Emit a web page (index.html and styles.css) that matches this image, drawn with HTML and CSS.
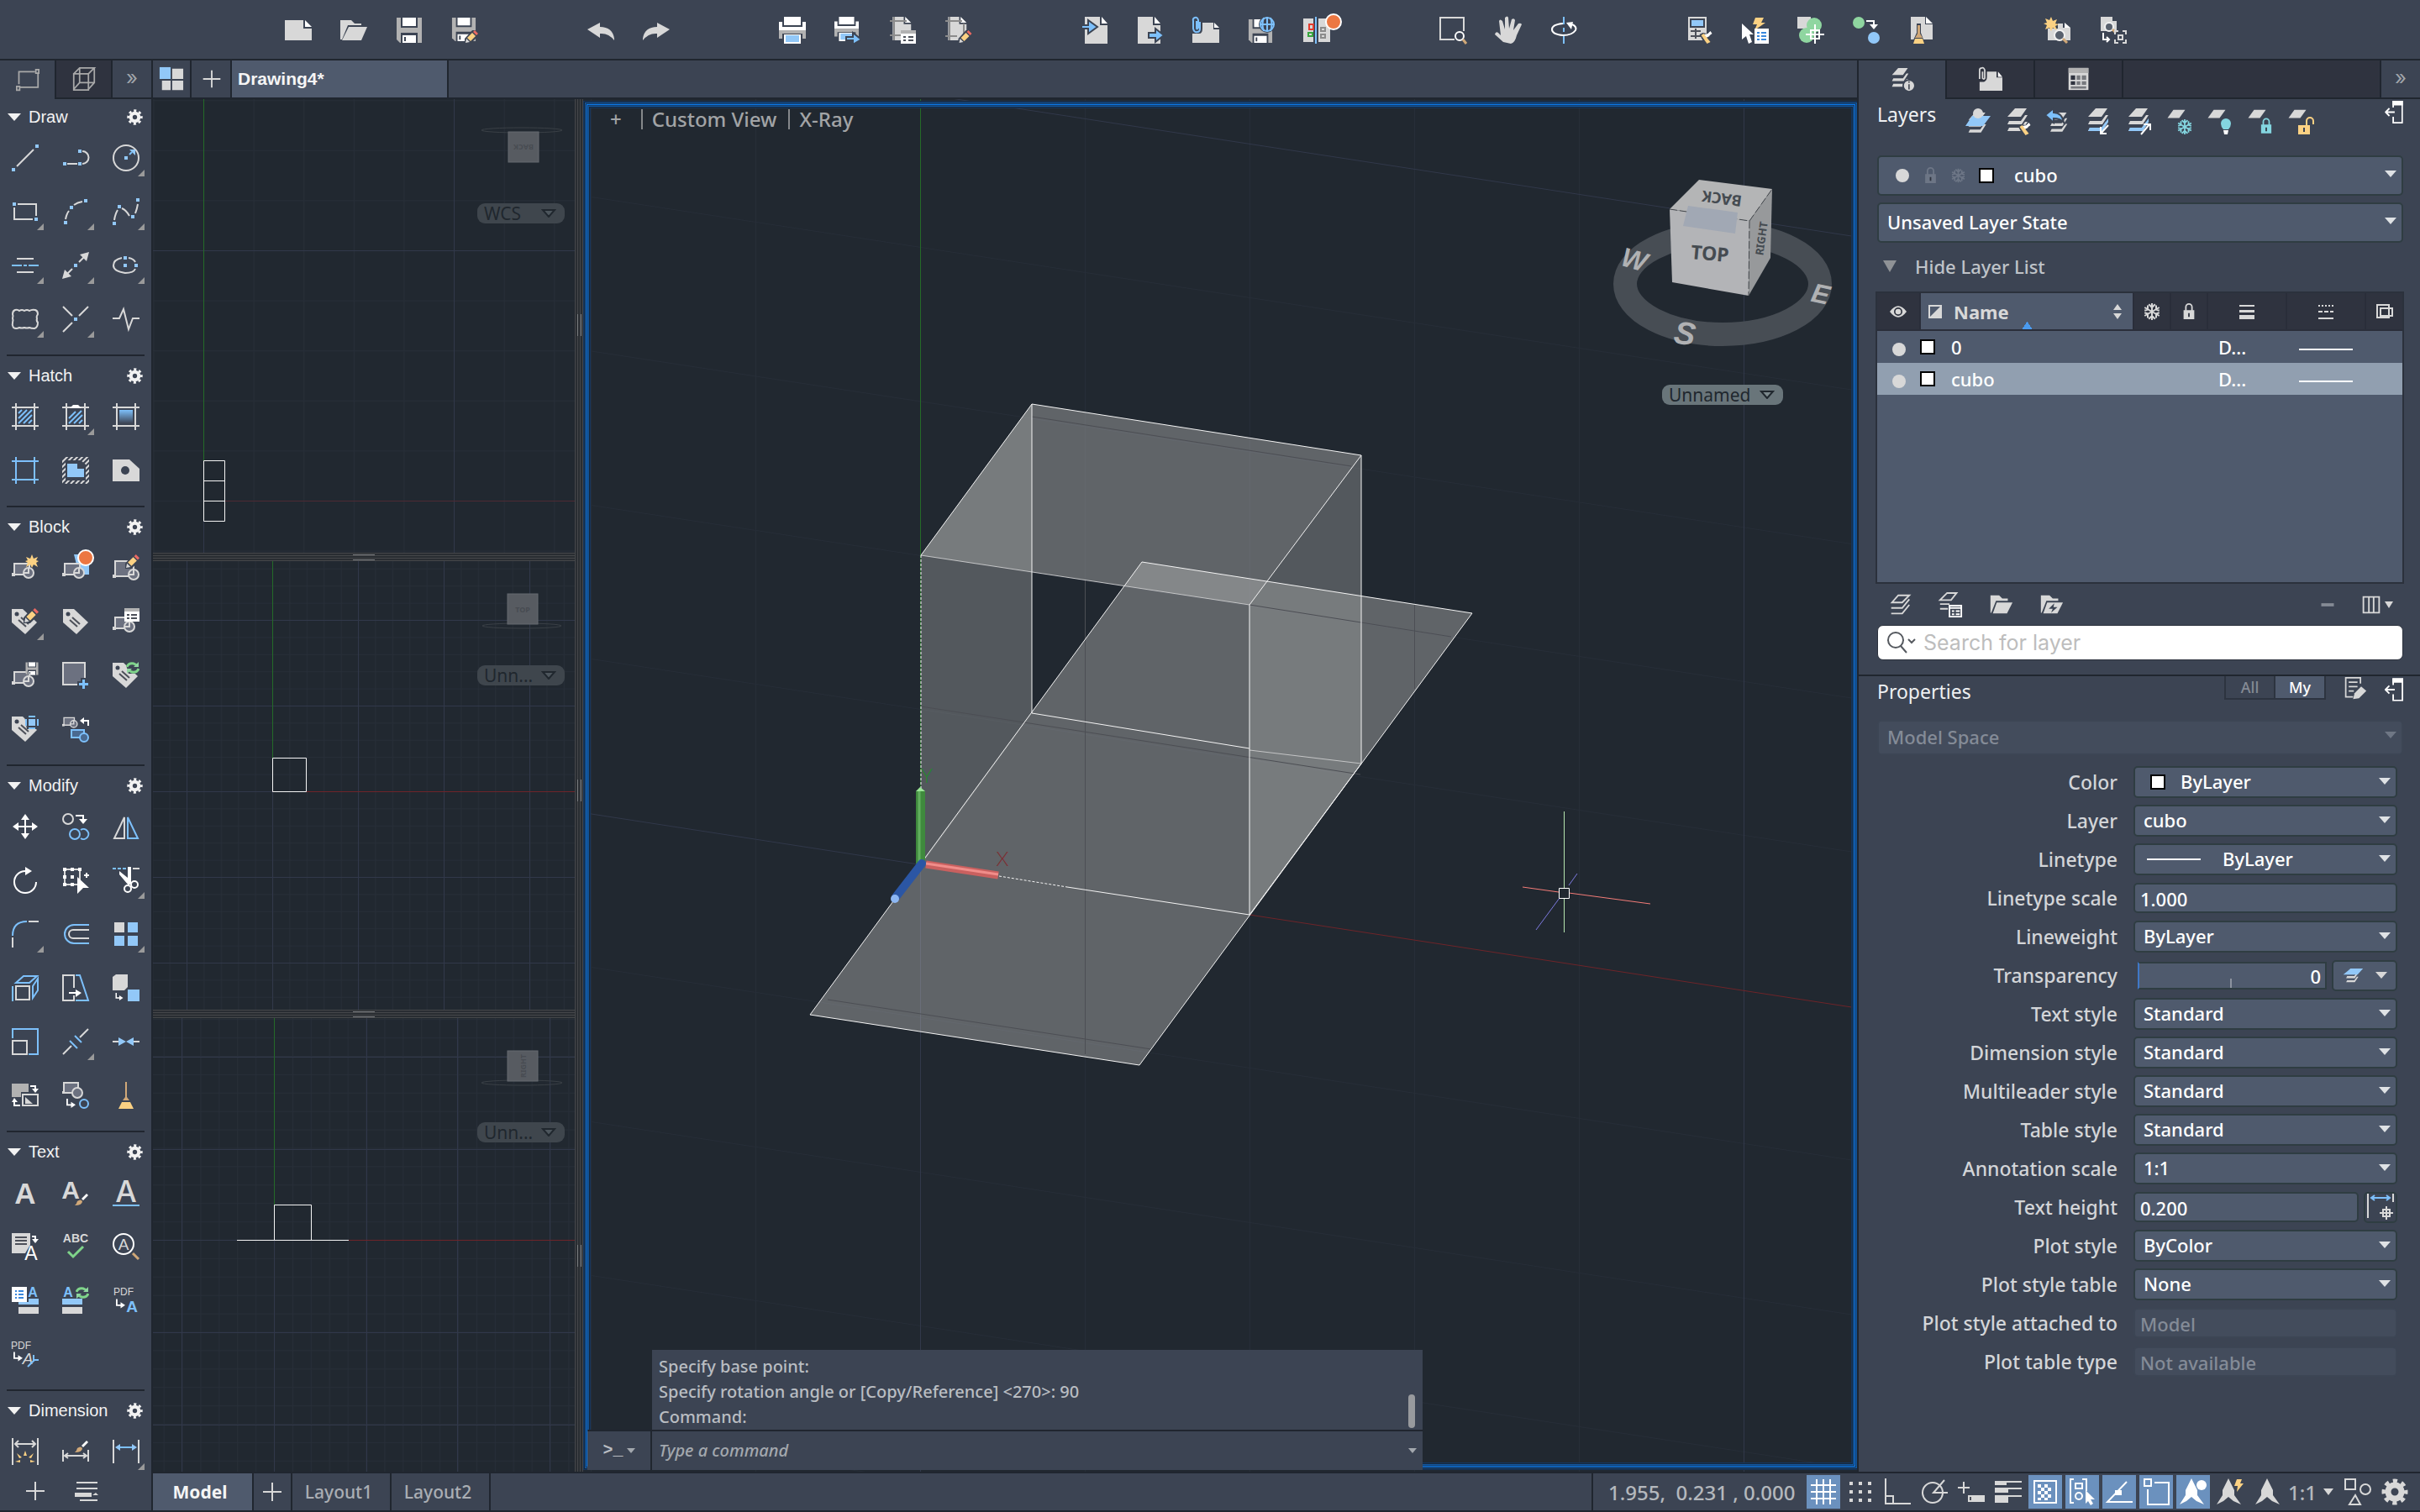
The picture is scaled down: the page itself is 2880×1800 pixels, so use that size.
FILE: index.html
```html
<!DOCTYPE html>
<html lang="en">
<head>
    <meta charset="UTF-8">
    <meta name="viewport" content="width=device-width, initial-scale=1.0">
    <title>Drawing4*</title>
    <link rel="stylesheet" href="styles.css">
</head>
<body>
    <!-- Shared icon parts -->
    <svg class="sprite" aria-hidden="true">
        <symbol id="gear" viewBox="0 0 32 32"><circle cx="16" cy="16" r="8" fill="none" stroke="currentColor" stroke-width="7"/><circle cx="16" cy="16" r="13" fill="none" stroke="currentColor" stroke-width="5" stroke-dasharray="5.2 5.01" stroke-dashoffset="2.6"/></symbol>
        <symbol id="page" viewBox="0 0 32 32"><path class="g" d="M5 0h15v10h10v22H5z"/><path class="w" d="M22 0l8 8h-8z"/></symbol>
        <symbol id="floppy" viewBox="0 0 32 32"><path class="m" d="M1 1h30v30H5l-4-4z"/><path class="k" d="M6 1h20v12H6zM6 19h20v12H6z"/><path class="w" d="M8 1h16v10H8zM8 22h16v9H8z"/><path class="k" d="M10 24h2v5h-2z"/></symbol>
        <symbol id="pencil" viewBox="0 0 16 16"><path class="k" d="M0 16V10L9 0h4l3 3v4L7 16z"/><path class="g" d="M1 15l1-5 4 4z"/><path class="y" d="M3 9l6-6 4 4-6 6z"/><path class="r" d="M10 2l2-2 4 4-2 2z"/></symbol>
        <symbol id="printer" viewBox="0 0 32 32"><path class="w" d="M6 0h20v10H6zM0 6h4v6h24V6h4v10H0z"/><path class="m" d="M0 16h32v10h-4v-6H4v6H0z"/><path class="w" d="M6 21h20v11H6z"/><path class="b" d="M8 22h16v8H8z"/></symbol>
        <symbol id="block" viewBox="0 0 32 24"><path class="lf" d="M3 3h18v13H3z"/><path class="g" d="M0 14h4v4H0z"/><circle class="lf" cx="20" cy="14" r="6"/><path class="l" d="M20 8v6h-6"/></symbol>
        <symbol id="tag" viewBox="0 0 32 32"><path class="g" d="M0 1h13l17 16-14 14L0 17z"/><circle class="k" cx="6" cy="7" r="2.5"/><path class="lk" d="M11 11l9 8M8 14l9 8"/></symbol>
        <symbol id="layer" viewBox="0 0 32 32"><path d="M12 2h16l-8 11H4z"/></symbol>
        <symbol id="layers" viewBox="0 0 32 32"><path class="g" d="M12 0h14l-7 10H3zM5 15h14l5-7h3l-7 11H3zM5 23h14l5-7h3l-7 11H3z"/></symbol>
        <symbol id="flake" viewBox="0 0 16 16"><path fill="none" stroke="currentColor" stroke-width="1.6" d="M8 0v16M1 4l14 8M1 12l14-8M5 1l3 3 3-3M5 15l3-3 3 3M1 7l3-1V2M15 7l-3-1V2M1 9l3 1v4M15 9l-3 1v4"/></symbol>
        <symbol id="lock" viewBox="0 0 16 22"><path fill="currentColor" d="M1 9h14v12H1z"/><path fill="none" stroke="currentColor" stroke-width="2" d="M4 10V5a4 4 0 0 1 8 0v5"/><path class="d" d="M7 13h2v5H7z"/></symbol>
        <symbol id="brush" viewBox="0 0 16 16"><path class="w" d="M8 7l6-6 2 2-6 6z"/><path class="t" d="M0 15q2-1 3-5 4-3 6 0 0 5-9 5z"/></symbol>
        <symbol id="broom" viewBox="0 0 16 16"><path class="k" d="M0 5l4-2 5 1 5-4 2 4-4 4 2 8H6z"/><path class="w" d="M9 5l4-4 2 3-4 3z"/><path class="w" d="M5 5l6-1 1 3-6 3z"/><path class="y" d="M2 6l3-2 8 10-4 2z"/></symbol>
        <symbol id="sync" viewBox="0 0 16 14"><path class="ln" d="M1 6q2-5 8-4l4 2M15 8q-2 5-8 4l-4-2"/><path class="n" d="M15 0v6H9zM1 14V8h6z"/></symbol>
        <symbol id="bend" viewBox="0 0 12 12"><path class="lw" d="M1 0v8h6"/><path class="w" d="M6 4l6 4-6 4z"/></symbol>
        <symbol id="dock" viewBox="0 0 24 30"><path class="w" d="M10 0h14v6H10z"/><path class="lw" d="M11 9V1h12v28H11v-8M1 15h12M6 10l-5 5 5 5"/></symbol>
        <symbol id="frame" viewBox="0 0 32 32"><path d="M5 0v32M27 0v32M0 5h32M0 27h32"/></symbol>
        <symbol id="down" viewBox="0 0 18 10"><path d="M2 1h14l-7 8z"/></symbol>
        <symbol id="ann" viewBox="0 0 32 32"><path fill="currentColor" d="M14 0l7 14v6l8 11-9-4-6-5-6 5-8 4 7-11v-6z"/></symbol>
    </svg>

    <div class="app">
        <header class="toolbar">
            <div class="tool-row">
                <button title="New"><svg viewBox="0 0 32 32"><path class="g" d="M0 4h22v10h10v14H0z"/><path class="w" d="M24 4l8 8h-8z"/></svg></button>
                <button title="Open"><svg viewBox="0 0 32 32"><path class="g" d="M0 4h13l4 4h8v2H9L2 27H0z"/><path class="g" d="M10 12h22l-7 16H2z"/></svg></button>
                <button title="Save"><svg viewBox="0 0 32 32"><use href="#floppy"/></svg></button>
                <button title="Save As"><svg viewBox="0 0 32 32"><use href="#floppy" width="30" height="30"/><use href="#pencil" x="16" y="16" width="16" height="16"/></svg></button>
            </div>
            <div class="tool-row">
                <button title="Undo"><svg viewBox="0 0 32 32"><path class="g" d="M0 15L15 7v5q15 0 17 14v2q-7-9-17-8v5z"/></svg></button>
                <button title="Redo"><svg viewBox="0 0 32 32"><path class="g" d="M32 15L17 7v5Q2 12 0 26v2q7-9 17-8v5z"/></svg></button>
            </div>
            <div class="tool-row">
                <button title="Plot"><svg viewBox="0 0 32 32"><use href="#printer"/></svg></button>
                <button title="Batch Plot"><svg viewBox="0 0 32 32"><use href="#printer" width="29" height="29"/><path class="bk" d="M14 24h8v-5l10 8-10 6v-5h-8z"/></svg></button>
                <button title="Page Setup"><svg viewBox="0 0 32 32"><use href="#page" x="-2" width="30" height="28"/><path class="lm" d="M0 5h20M5 0v28M0 22h14"/><path class="w" d="M13 16h18v16H13z"/><path class="m" d="M13 16h18v4H13z"/><path class="lk" d="M16 24h3M22 24h6M16 28h3M22 28h6"/></svg></button>
                <button title="Edit Plot Style"><svg viewBox="0 0 32 32"><use href="#page" x="-2" width="30" height="28"/><path class="lm" d="M0 5h20M5 0v28M0 23h14M22 8v18"/><use href="#pencil" x="15" y="16" width="17" height="16"/></svg></button>
            </div>
            <div class="tool-row">
                <button title="Import"><svg viewBox="0 0 32 32"><path class="g" d="M4 0h18v10h9v22H4z"/><path class="w" d="M24 0l7 8h-7z"/><path class="bk" d="M0 10h8V4l11 8-11 8v-6H0z"/></svg></button>
                <button title="Export"><svg viewBox="0 0 32 32"><path class="g" d="M1 0h18v10h9v22H1z"/><path class="w" d="M21 0l7 8h-7z"/><path class="bk" d="M14 19h8v-5l10 8-10 8v-5h-8z"/></svg></button>
                <button title="Attach"><svg viewBox="0 0 32 32"><path class="g" d="M0 20h8q4 0 4-6V7h13v8h7v16H0z"/><path class="w" d="M26 7l6 6h-6z"/><path class="lb" d="M5 5v8q0 3 2 0V4q-1-4-4-3t-2 4v9q1 5 5 4 3 0 3-4V6"/></svg></button>
                <button title="Save to Web"><svg viewBox="0 0 32 32"><use href="#floppy" y="2" width="30" height="30"/><circle class="k" cx="23" cy="9" r="10"/><circle class="lb" cx="23" cy="9" r="8"/><path class="lb" d="M23 0v18M14 9h18M19 1q-3 8 0 16M27 1q3 8 0 16"/></svg></button>
                <button title="Compare"><svg viewBox="0 0 32 32"><path class="g" d="M0 2h12v28H0zM18 2h14v28H18z"/><path class="lb" d="M15 0v32"/><path fill="none" stroke="#e33b2e" stroke-width="2" d="M7 9h5v6H7z"/><path fill="none" stroke="#36a53c" stroke-width="2" d="M6 19h5v4H6z"/><path class="lm" d="M21 13h5v4h-5zM21 21h5v4h-5z"/></svg><span class="badge"></span></button>
            </div>
            <div class="tool-row">
                <button title="Zoom Window"><svg viewBox="0 0 32 32"><path class="l" d="M18 27H1V1h28v16"/><circle class="lw" cx="24" cy="23" r="5"/><path class="lt" d="M28 27l4 5"/></svg></button>
                <button title="Pan"><svg viewBox="0 0 32 32"><path class="g" d="M10 30L0 21q1-4 4-2l3 3L5 5q1-3 4 0l3 10V1q3-3 4 0l1 13 3-11q3-2 4 1l-2 12 6-8q3-1 4 1l-6 13q-2 9-7 10z"/></svg></button>
                <button title="Orbit"><svg viewBox="0 0 32 32"><path class="lb" d="M16 0v9M16 13v5M16 23v9"/><path class="lw" d="M26 9q6 3 4 7-4 6-15 6Q2 21 2 15q0-6 13-7"/><path class="w" d="M19 7l8-1-2 9z"/></svg></button>
            </div>
            <div class="tool-row">
                <button title="Match Properties"><svg viewBox="0 0 32 32"><path class="g" d="M2 0h22v28H2z"/><path class="k" d="M4 2h18v11H4z"/><path class="b" d="M6 4h14v7H6z"/><path class="lk" d="M5 17h12M5 23h12M11 14v12"/><use href="#broom" x="15" y="16" width="17" height="16"/></svg></button>
                <button title="Quick Select"><svg viewBox="0 0 32 32"><path class="y" d="M16 1h10l-3 6h5L15 16l3-7h-5z"/><path class="w" d="M15 14h17v18H15z"/><path class="lbb" d="M18 19h3M23 19h6M18 23h3M23 23h6M18 27h3M23 27h6"/><path class="w" d="M0 8l14 13H9l3 9-4 2-3-9-5 4z"/></svg></button>
                <button title="Locate"><svg viewBox="0 0 32 32"><path class="g" d="M0 0h16v14H0z"/><circle class="n" cx="20" cy="10" r="9"/><circle class="n" cx="11" cy="22" r="9"/><path class="lw" d="M21 9v23M10 21h22M16 16h10v10H16z"/></svg></button>
                <button title="Replace"><svg viewBox="0 0 32 32"><circle class="n" cx="7" cy="7" r="7"/><circle class="b" cx="25" cy="25" r="7"/><path class="lw" d="M16 5h9v5"/><path class="w" d="M20 9h10l-5 6z"/></svg></button>
                <button title="Purge"><svg viewBox="0 0 32 32"><path class="g" d="M3 0h17v9h9v18H3z"/><path class="w" d="M21 0l8 8h-8z"/><path class="k" d="M10 8h5v11l5 13H4l6-13z"/><path class="t" d="M11 10h3v10l3 5H8l3-5z"/><path class="y" d="M8 26h9l2 6H6z"/></svg></button>
            </div>
            <div class="tool-row">
                <button title="New View"><svg viewBox="0 0 32 32"><path class="g" d="M4 14h12V8h6v5h9v15H4z"/><path class="w" d="M24 7l7 6h-7z"/><path class="y" d="M8 0l2 5 5-2-2 5 4 1-4 2 2 5-5-3-2 4-2-4-5 2 2-5-4-2 4-1-2-5 5 2z"/><circle class="lensring" cx="18" cy="22" r="6"/><path class="lt" d="M22 26l5 5"/></svg></button>
                <button title="View Manager"><svg viewBox="0 0 32 32"><path class="g" d="M1 0h14v5h5v12H1z"/><circle class="lensring" cx="11" cy="12" r="5"/><path class="lt" d="M15 15l4 4"/><path class="lw" d="M4 19v8h7M8 24l3 3-3 3"/><path class="l" d="M18 21v-4h4M27 17h4v4M18 27v4h4M27 31h4v-4M22 22h5v5h-5z"/></svg></button>
            </div>
        </header>

        <aside class="palette">
            <div class="palette-tabs">
                <button class="ptab active" title="Drafting"><svg viewBox="0 0 32 32"><path class="la" d="M4 22V5h22M30 8v18H5"/><path class="la" d="M27 2h4v5h-4zM1 25h4v5H1z"/></svg></button>
                <button class="ptab" title="Modeling"><svg viewBox="0 0 32 32"><path class="la" d="M2 9h20v22H2zM2 9l8-8h20l-8 8M30 1v20l-8 9M10 1v20h20M10 21l-8 9"/></svg></button>
                <button class="ptab more" title="More">»</button>
            </div>
            <div class="palette-body">
                <section class="tool-group">
                    <h2><span class="tri"></span>Draw<button title="Settings"><svg><use href="#gear"/></svg></button></h2>
                    <div class="tools">
                        <button title="Line"><svg viewBox="0 0 32 32"><path class="l" d="M6 26L26 6"/><path class="b" d="M28 0h4v4h-4zM0 28h4v4H0z"/></svg></button>
                        <button title="Polyline"><svg viewBox="0 0 32 32"><path class="l" d="M6 23h12M24 8a7.500 7.500 0 0 1 0 15"/><path class="b" d="M19 6h4v4h-4zM1 21h4v4H1zM19 21h4v4h-4z"/></svg></button>
                        <button class="more" title="Circle"><svg viewBox="0 0 32 32"><circle class="l" cx="16" cy="16" r="15"/><path class="b" d="M14 14h4v4h-4zM20 6h7v7z"/><path class="lb" d="M20 12l3-3"/></svg></button>
                        <button class="more" title="Rectangle"><svg viewBox="0 0 32 32"><path class="l" d="M7 7h22v14M25 25H3V11"/><path class="b" d="M1 5h4v4H1zM27 23h4v4h-4z"/></svg></button>
                        <button class="more" title="Arc"><svg viewBox="0 0 32 32"><path class="l" d="M4 25q1-6 4-10M14 8q4-3 10-4"/><path class="b" d="M2 27h4v4H2zM9 9h4v4H9zM26 1h4v4h-4z"/></svg></button>
                        <button class="more" title="Spline"><svg viewBox="0 0 32 32"><path class="l" d="M2 26q1-7 4-12M11 12q5 2 9 9M27 18q2-5 3-11"/><path class="b" d="M0 28h4v4H0zM6 8h4v4H6zM22 20h4v4h-4zM28 0h4v4h-4z"/></svg></button>
                        <button class="more" title="Centerline"><svg viewBox="0 0 32 32"><path class="l" d="M6 8h20M6 24h20"/><path class="lb" d="M0 16h12M14 16h4M20 16h12"/></svg></button>
                        <button class="more" title="Ray"><svg viewBox="0 0 32 32"><path class="l" d="M12 20l-6 6M20 12l6-6"/><path class="g" d="M32 0l-3 11-8-8zM0 32l3-11 8 8z"/><path class="b" d="M14 14h4v4h-4z"/></svg></button>
                        <button class="more" title="Ellipse"><svg viewBox="0 0 32 32"><path class="l" d="M11 7q-10 2-10 9t14 9q10 0 12-5M19 7q6 1 8 5"/><path class="b" d="M13 5h4v4h-4zM13 14h4v4h-4zM26 14h4v4h-4z"/></svg></button>
                        <button class="more" title="Revision Cloud"><svg viewBox="0 0 32 32"><path class="l" d="M4 5q3-1 5 1 3-2 6 0 3-2 6 0 3-2 7-1 3 1 3 5-2 3-1 5-1 3 1 5 0 6-4 7-4 0-6-1-3 1-6 0-3 1-6 0-4 2-7 0-2-3-1-6 1-3 0-5 1-3 0-5 0-4 3-5z"/></svg></button>
                        <button class="more" title="Multiple Points"><svg viewBox="0 0 32 32"><path class="l" d="M1 1l11 11M31 1L20 12M1 31l11-11"/><path class="b" d="M14 14h4v4h-4z"/></svg></button>
                        <button title="Break-line"><svg viewBox="0 0 32 32"><path class="l" d="M0 15h8l5-11 6 24 5-13h8"/></svg></button>
                    </div>
                </section>
                <section class="tool-group">
                    <h2><span class="tri"></span>Hatch<button title="Settings"><svg><use href="#gear"/></svg></button></h2>
                    <div class="tools">
                        <button title="Hatch"><svg viewBox="0 0 32 32"><use class="l" href="#frame"/><path class="lb" d="M8 12l4-4M8 18L18 8M8 24L24 8M14 24l10-10M20 24l4-4"/></svg></button>
                        <button class="more" title="Hatch Edit"><svg viewBox="0 0 32 32"><use class="l" href="#frame"/><path class="lb" d="M8 18l8-8M8 24l15-15M14 24l10-10M20 24l4-4"/><path class="w" d="M9 6l4-4h6l4 4z"/></svg></button>
                        <button title="Gradient"><svg viewBox="0 0 32 32"><defs><linearGradient id="fade" x2="0" y2="1"><stop stop-color="#7dc0fb"/><stop offset="1" stop-color="#3d4454"/></linearGradient></defs><use class="l" href="#frame"/><path fill="url(#fade)" d="M8 8h16v16H8z"/></svg></button>
                        <button title="Boundary"><svg viewBox="0 0 32 32"><use class="lb" href="#frame"/></svg></button>
                        <button title="Region"><svg class="clip" viewBox="0 0 32 32"><path class="l" d="M-2 8L8-2M-2 14L14-2M-2 20L20-2M-2 26L26-2M-2 32L32-2M4 32L34 2M10 32L34 8M16 32l18-18M22 32l12-12M28 32l6-6"/><path class="k" d="M4 4h18l6 5v19H4z"/><path class="b" d="M6 8h12v6h8v10H6z"/></svg></button>
                        <button title="Wipeout"><svg viewBox="0 0 32 32"><path class="g" d="M0 3h20l12 11v15H0z"/><circle class="k" cx="15" cy="16" r="5"/></svg></button>
                    </div>
                </section>
                <section class="tool-group">
                    <h2><span class="tri"></span>Block<button title="Settings"><svg><use href="#gear"/></svg></button></h2>
                    <div class="tools">
                        <button title="Create Block"><svg viewBox="0 0 32 32"><use href="#block" y="8" width="32" height="24"/><path class="y" d="M24 0l2 5 5-2-2 4 3 1-3 2 2 5-5-3-2 4-2-4-5 3 2-5-3-2 3-1-2-4 5 2z"/></svg></button>
                        <button title="Insert Block"><svg viewBox="0 0 32 32"><path class="b" d="M14 0h18v24H20z"/><use href="#block" y="8" width="32" height="24"/></svg><span class="badge"></span></button>
                        <button title="Edit Block"><svg viewBox="0 0 32 32"><path class="lf" d="M3 8h22v18H3z"/><path class="g" d="M0 24h4v4H0z"/><circle class="lf" cx="25" cy="24" r="6"/><path class="l" d="M25 18v6h-6"/><use href="#pencil" x="15" y="0" width="17" height="17"/></svg></button>
                        <button class="more" title="Edit Attributes"><svg viewBox="0 0 32 32"><use href="#tag"/><use href="#pencil" x="14" y="0" width="18" height="18"/></svg></button>
                        <button title="Define Attributes"><svg viewBox="0 0 32 32"><use href="#tag" x="1"/></svg></button>
                        <button title="Block Attribute Manager"><svg viewBox="0 0 32 32"><use href="#block" y="8" width="32" height="24"/><path class="w" d="M14 0h18v16H14z"/><path class="m" d="M14 0h18v4H14z"/><path class="lk" d="M17 8h3M22 8h7M17 12h3M22 12h7"/></svg></button>
                        <button title="Write Block"><svg viewBox="0 0 32 32"><use href="#block" y="9" width="32" height="24"/><use href="#floppy" x="16" width="16" height="16"/></svg></button>
                        <button title="Set Base Point"><svg viewBox="0 0 32 32"><path class="lf" d="M1 1h26v26H1z"/><path class="bk" d="M23 20h5v4h4v5h-4v4h-5v-4h-4v-5h4z"/></svg></button>
                        <button title="Sync Attributes"><svg viewBox="0 0 32 32"><use href="#tag"/><path class="k" d="M15 0h17v14H19z"/><use href="#sync" x="16" width="16" height="14"/></svg></button>
                        <button title="Retain Attributes"><svg viewBox="0 0 32 32"><use href="#tag"/><path class="k" d="M15 0h17v16H18z"/><path class="b" d="M20 4h8v8h-8z"/><path class="lb" d="M17 4v8M31 4v8M20 1h8M20 15h8"/></svg></button>
                        <button title="Replace Block"><svg viewBox="0 0 32 32"><use href="#block" width="22" height="17"/><g class="bluepart"><path d="M11 17h15v9H11z"/><circle cx="26" cy="26" r="5"/></g><path class="lw" d="M31 12V6h-6"/><path class="w" d="M26 2v8l-5-4z"/></svg></button>
                    </div>
                </section>
                <section class="tool-group">
                    <h2><span class="tri"></span>Modify<button title="Settings"><svg><use href="#gear"/></svg></button></h2>
                    <div class="tools">
                        <button title="Move"><svg viewBox="0 0 32 32"><path class="w" d="M16 1l5 7h-4v7h7v-4l7 5-7 5v-4h-7v7h4l-5 7-5-7h4v-7H8v4l-7-5 7-5v4h7V8h-4z"/></svg></button>
                        <button title="Copy"><svg viewBox="0 0 32 32"><circle class="l" cx="7" cy="7" r="6"/><circle class="lb" cx="15" cy="25" r="6"/><path class="lb" d="M22 20a6 6 0 1 1 0 10"/><path class="lw" d="M16 3h9v6"/><path class="w" d="M20 7h10l-5 6z"/></svg></button>
                        <button title="Mirror"><svg viewBox="0 0 32 32"><path class="l" d="M14 5v25H2z"/><path class="lb" d="M18 5v25h12z"/></svg></button>
                        <button title="Rotate"><svg viewBox="0 0 32 32"><path class="lw" d="M16 5A13 13 0 1 0 29 18"/><path class="w" d="M16 0l8 5-8 5z"/></svg></button>
                        <button title="Stretch"><svg viewBox="0 0 32 32"><path class="l" d="M3 3h18v18H3z"/><path class="w" d="M1 1h4v4H1zM10 1h4v4h-4zM19 1h4v4h-4zM1 10h4v4H1zM10 10h4v4h-4zM1 19h4v4H1zM10 19h4v4h-4z"/><path class="w" d="M18 12l14 13h-7l-7 7z"/><path class="lw" d="M26 10h6M29 7v6"/></svg></button>
                        <button class="more" title="Trim"><svg viewBox="0 0 32 32"><path class="lb" d="M0 2h4M6 2h4M12 2h4"/><path class="l" d="M24 2h8"/><path class="w" d="M8 5l10 8V0h4v20l-3 2L8 9z"/><circle class="lw" cx="18" cy="26" r="4"/><circle class="lw" cx="26" cy="21" r="4"/></svg></button>
                        <button class="more" title="Fillet"><svg viewBox="0 0 32 32"><path class="lb" d="M1 18Q1 1 18 1"/><path class="l" d="M20 1h12M1 20v12"/></svg></button>
                        <button title="Offset"><svg viewBox="0 0 32 32"><path class="lb" d="M32 5H14a11 11 0 0 0 0 22h18"/><path class="l" d="M32 11H13a5 5 0 0 0 0 10h19"/></svg></button>
                        <button class="more" title="Array"><svg viewBox="0 0 32 32"><path class="g" d="M2 2h12v12H2z"/><path class="b" d="M18 2h12v12H18zM2 18h12v12H2zM18 18h12v12H18z"/></svg></button>
                        <button title="Extrude"><svg viewBox="0 0 32 32"><path class="l" d="M5 14h16v16H5z"/><path class="lb" d="M1 14v18M5 10l9-8h16l-9 8zM25 14l6-9v14l-6 9z"/></svg></button>
                        <button title="Taper"><svg viewBox="0 0 32 32"><path class="l" d="M14 16V1H1v30h13v-6"/><path class="lb" d="M16 1h5l10 30H16"/><path class="lw" d="M8 22h12"/><path class="w" d="M16 18l7 4-7 5z"/></svg></button>
                        <button title="Extract"><svg viewBox="0 0 32 32"><path class="g" d="M0 3l4-3h14v15l-4 4H0z"/><path class="b" d="M18 18h14v14H18z"/><use href="#bend" x="2" y="22" width="12" height="9"/></svg></button>
                        <button title="Scale"><svg viewBox="0 0 32 32"><path class="l" d="M1 15h17v16H1z"/><path class="lb" d="M1 12V1h30v30H20"/></svg></button>
                        <button class="more" title="Break"><svg viewBox="0 0 32 32"><path class="l" d="M1 31l10-10M21 11L31 1"/><path class="lb" d="M9 15l9 9M15 9l8 8"/></svg></button>
                        <button title="Join"><svg viewBox="0 0 32 32"><path class="l" d="M0 16h8M24 16h8"/><path class="b" d="M7 11l9 5-9 5zM25 11l-9 5 9 5z"/></svg></button>
                        <button title="Draw Order"><svg viewBox="0 0 32 32"><path class="m" d="M0 2h20v10h-9v6H0z"/><path class="l" d="M13 15h18v13H13z"/><path class="g" d="M16 18l9 8h-9z"/><path class="lw" d="M22 5h6v4M10 28H3v-5"/><path class="w" d="M24 8h8l-4 5zM0 24h7l-4-5z"/></svg></button>
                        <button title="Copy Nested"><svg viewBox="0 0 32 32"><path class="lf" d="M2 1h17v12H2z"/><circle class="lf" cx="18" cy="13" r="6"/><path class="g" d="M0 11h3v3H0z"/><use href="#bend" x="4" y="20" width="13" height="11"/><circle class="lb" cx="26" cy="26" r="5"/></svg></button>
                        <button title="Overkill"><svg viewBox="0 0 32 32"><path class="t" d="M15 0h2v18l3 4h-8l3-4z"/><path class="y" d="M11 24h10l4 8H7z"/></svg></button>
                    </div>
                </section>
                <section class="tool-group">
                    <h2><span class="tri"></span>Text<button title="Settings"><svg><use href="#gear"/></svg></button></h2>
                    <div class="tools">
                        <button title="Multiline Text"><svg viewBox="0 0 32 32"><text class="ta" x="16" y="29" font-size="35">A</text></svg></button>
                        <button title="Text Style"><svg viewBox="0 0 32 32"><text class="ta" x="10" y="23" font-size="30">A</text><use href="#brush" x="14" y="16" width="18" height="16"/></svg></button>
                        <button title="Single Line Text"><svg viewBox="0 0 32 32"><text class="ta med" x="16" y="27" font-size="36">A</text><path class="lb" d="M0 31h32"/></svg></button>
                        <button title="Convert to Mtext"><svg viewBox="0 0 32 32"><path class="g" d="M0 0h22v14l-6 10H0z"/><path class="lk" d="M4 5h14M4 9h14M4 13h14"/><path class="lw" d="M24 4h4v4"/><path class="w" d="M24 7h8l-4 5z"/><text class="ta tw" x="23" y="32" font-size="23">A</text></svg></button>
                        <button title="Check Spelling"><svg viewBox="0 0 32 32"><text class="ts" x="16" y="11" font-size="14">ABC</text><path class="ln" stroke-width="4" d="M7 22l6 6 12-12"/></svg></button>
                        <button title="Find Text"><svg viewBox="0 0 32 32"><circle class="lw" cx="13" cy="13" r="12"/><text class="ta thin" x="13" y="20" font-size="19">A</text><path class="lt" stroke-width="4" d="M24 24l7 7"/></svg></button>
                        <button title="Text Fields"><svg viewBox="0 0 32 32"><path class="b" d="M20 14h12v7H8v-3h12z"/><path class="g" d="M8 24h24v8H8z"/><path class="w" d="M0 0h18v18H0z"/><path class="lbb" d="M4 5h2M8 5h6M4 9h2M8 9h6M4 13h2M8 13h6"/><text class="ts tb" x="25" y="12" font-size="16">A</text></svg></button>
                        <button title="Update Fields"><svg viewBox="0 0 32 32"><path class="b" d="M0 14h24v7H0z"/><path class="g" d="M0 24h24v8H0z"/><text class="ts tb" x="7" y="12" font-size="16">A</text><use href="#sync" x="16" width="16" height="14"/></svg></button>
                        <button title="PDF Text"><svg viewBox="0 0 32 32"><text class="ts thin" x="13" y="10" font-size="12">PDF</text><use href="#bend" x="4" y="14" width="11" height="12"/><text class="ts tb" x="23" y="30" font-size="19">A</text></svg></button>
                        <button title="PDF Text Settings"><svg viewBox="0 0 32 32"><text class="ts thin" x="11" y="10" font-size="12">PDF</text><use href="#bend" x="2" y="13" width="11" height="12"/><text class="ta thin" x="19" y="28" font-size="19" font-style="italic">A</text><path class="lb" stroke-width="3" d="M19 31l8-8M26 17v6h6"/></svg></button>
                    </div>
                </section>
                <section class="tool-group">
                    <h2><span class="tri"></span>Dimension<button title="Settings"><svg><use href="#gear"/></svg></button></h2>
                    <div class="tools">
                        <button title="Dimension"><svg viewBox="0 0 32 32"><path class="l" d="M1 0v32M31 0v32M4 7h24M8 3L4 7l4 4M24 3l4 4-4 4"/><path class="y" d="M14 21l2-6 2 6zM6 18l6 5-3 1zM26 18l-6 5 3 1zM4 28l6-2v3zM28 28l-6-2v3z"/></svg></button>
                        <button title="Dimension Style"><svg viewBox="0 0 32 32"><path class="l" d="M1 14v14M31 14v14M4 21h24M7 18l-4 3 4 3M25 18l4 3-4 3"/><use href="#brush" x="14" y="2" width="18" height="16"/></svg></button>
                        <button class="more" title="Linear"><svg viewBox="0 0 32 32"><path class="l" d="M1 2v28M31 2v28"/><path class="lb" d="M5 11h22"/><path class="b" d="M3 11l6-4v8zM29 11l-6-4v8z"/></svg></button>
                    </div>
                </section>
            </div>
            <div class="palette-foot">
                <button title="Add"><svg viewBox="0 0 32 32"><path class="l" d="M16 5v22M5 16h22"/></svg></button>
                <button title="Customize"><svg viewBox="0 0 32 32"><path class="l" d="M5 6h25M5 13h25M9 27h21"/><path class="g" d="M3 18h20v5H3zM24 21l4-3 3 3z"/></svg></button>
            </div>
        </aside>

        <nav class="file-tabs">
            <button class="start" title="Start"><svg viewBox="0 0 32 32"><path class="b" d="M1 1h14v15H1z"/><path class="g" d="M17 3h14v13H17zM4 18h11v12H4zM17 18h14v12H17z"/></svg></button>
            <button class="add" title="New tab"><svg viewBox="0 0 32 32"><path class="l" d="M16 5v22M5 16h22"/></svg></button>
            <button class="file">Drawing4*</button>
        </nav>

        <main class="workspace">
            <section class="viewport small">
                <svg class="canvas" viewBox="182 118 502 540" preserveAspectRatio="xMinYMin slice">
                    <defs><pattern id="g1" x="242" y="596" width="59.600" height="59.600" patternUnits="userSpaceOnUse"><path class="minor" d="M.5 0v60M0 .5h60"/></pattern></defs>
                    <rect x="182" y="118" width="502" height="540" fill="url(#g1)"/>
                    <path class="major" d="M540.500 118v540M242.500 596v62M182 298.500h502"/>
                    <path class="axis-x" d="M242 596.500h442"/><path class="axis-y" d="M242.500 118v478"/>
                    <path class="edge" d="M242.500 548.500h25v72h-25zM242.500 572.500h25M242.500 596.500h25"/>
                    <ellipse class="ring" cx="621" cy="155" rx="48" ry="3"/>
                    <rect class="cube" x="605" y="157" width="36" height="36"/><text class="cubetext" x="-623" y="-172" transform="rotate(180)">BACK</text>
                </svg>
                <button class="ucs">WCS<svg><use href="#down"/></svg></button>
            </section>
            <div class="split-h"></div>
            <section class="viewport small">
                <svg class="canvas" viewBox="182 668 502 534" preserveAspectRatio="xMinYMin slice">
                    <defs><pattern id="g2" x="324" y="942" width="20.400" height="20.400" patternUnits="userSpaceOnUse"><path class="minor" d="M.5 0v21M0 .5h21"/></pattern></defs>
                    <rect x="182" y="668" width="502" height="534" fill="url(#g2)"/>
                    <path class="major" d="M222.500 668v534M324.500 942v260M426.500 668v534M528.500 668v534M630.500 668v534M182 738.500h502M182 840.500h502M182 942.500h142M182 1044.500h502M182 1146.500h502"/>
                    <path class="axis-x strong" d="M324 942.500h360"/><path class="axis-y" d="M324.500 668v274"/>
                    <path class="edge" d="M324.500 902.500h40v40h-40z"/>
                    <ellipse class="ring" cx="621" cy="745" rx="47" ry="3"/>
                    <rect class="cube" x="604" y="707" width="36" height="36"/><text class="cubetext" x="622" y="729">TOP</text>
                </svg>
                <button class="ucs">Unn...<svg><use href="#down"/></svg></button>
            </section>
            <div class="split-h"></div>
            <section class="viewport small">
                <svg class="canvas" viewBox="182 1212 502 540" preserveAspectRatio="xMinYMin slice">
                    <defs><pattern id="g3" x="326" y="1476" width="21.900" height="21.900" patternUnits="userSpaceOnUse"><path class="minor" d="M.5 0v22M0 .5h22"/></pattern></defs>
                    <rect x="182" y="1212" width="502" height="540" fill="url(#g3)"/>
                    <path class="major" d="M216.500 1212v540M326.500 1476v276M436.500 1212v540M544.500 1212v540M654.500 1212v540M182 1258.500h502M182 1368.500h502M182 1476.500h144M182 1586.500h502M182 1696.500h502"/>
                    <path class="axis-x strong" d="M326 1476.500h358"/><path class="axis-y" d="M326.500 1212v264"/>
                    <path class="edge" d="M326.500 1476.500v-42h44v42M282 1476.500h133"/>
                    <ellipse class="ring" cx="621" cy="1289" rx="48" ry="3"/>
                    <rect class="cube" x="604" y="1251" width="36" height="36"/><text class="cubetext" x="-1269" y="626" transform="rotate(-90)">RIGHT</text>
                </svg>
                <button class="ucs">Unn...<svg><use href="#down"/></svg></button>
            </section>
            <div class="split-v"><i></i><i></i><i></i></div>

            <section class="viewport main">
                <svg class="canvas" viewBox="694 118 1516 1634" preserveAspectRatio="xMinYMin slice">
                    <path class="minor" d="M703.500 118v1634M899.500 118v1634M1291.500 118v1634M1487.500 118v1634M1683.500 118v1634M1879.500 118v1634"/>
                    <path class="minor" d="M694 233l1516 232M694 416.500l1516 232M694 600l1516 232M694 783l1516 232M694 1150l1516 232M694 1334l1516 232M694 1517l1516 232M694 1701l1516 232"/>
                    <path class="major" d="M2075.500 118v1634M1095.500 1029v723M694 50l1516 232M694 967.500l402 62"/>
                    <path class="axis-x strong" d="M1487 1089l723 111"/>
                    <path class="axis-y" d="M1095.500 118v911"/>

                    <!-- unfolded faces of the box -->
                    <path class="face" d="M1359 669L1752 730 1356 1268 964 1208z"/>
                    <path class="face" d="M1228 481l392 61-133 178-391-59z"/>
                    <path class="side" d="M1096 661l132-180v368l-132 181z"/>
                    <path class="side" d="M1487 720l133-178v367l-133 180z"/>
                    <path class="ghost" d="M1228 496l380 59M1096 841l523 81M1487 720l240 38M985 1190l385 59M1291.500 690v565M1683.500 720v100"/>
                    <path class="edge soft" d="M1096 661l391 59M1487 893l133 16"/>
                    <path class="edge" d="M1096 661l132-180 392 61v367l-133 180V720l133-178M1228 481v368l259 42M1359 669l393 61-396 538-392-60zM1270 1056l217 33"/>
                    <path class="edge dots" d="M1096 661v280M1189 1043l81 13"/>

                    <g class="gizmo">
                        <path stroke="#3f8a3d" stroke-width="11" d="M1095.500 942v86"/><path stroke="#63b05f" stroke-width="3" d="M1094 942v86"/>
                        <path stroke="#c9605f" stroke-width="9" d="M1102 1029l86 13"/><path stroke="#f08d8a" stroke-width="3" d="M1102 1028l86 13"/>
                        <path stroke="#2b56a4" stroke-width="10" stroke-linecap="round" d="M1097 1028l-31 40"/><circle cx="1065" cy="1070" r="5" fill="#8db7f3"/>
                        <path fill="#9be796" d="M1090 942l5-5 6 5z"/>
                        <text x="1103" y="932" fill="#27862f">Y</text><text x="1193" y="1031" fill="#7d2e33">X</text>
                    </g>

                    <g class="crosshair">
                        <path stroke="#f47c78" d="M1812 1056l43 6M1867 1063l97 13"/><path stroke="#7d7ae0" d="M1877 1040l-10 14M1856 1069l-28 38"/>
                        <path stroke="#b6e5b0" d="M1861.500 966v91M1861.500 1069v41"/><path stroke="#fff" d="M1855.500 1057.500h12v12h-12z"/>
                    </g>

                    <!-- view cube with compass -->
                    <ellipse cx="2050" cy="338" rx="116" ry="60" class="compass"/>
                    <path fill="#b4b5b6" d="M2022 214l87 11-27 38-95-14z"/>
                    <path fill="#b3b4b7" d="M1987 249l95 14-1 89-91-16z"/>
                    <path fill="#97999b" d="M2109 225l-2 82-26 45 1-89z"/>
                    <path class="cubeline" d="M1987 249l95 14 27-38M2082 263l-1 89"/>
                    <path fill="#a1a8b4" d="M2009 245l59 8-3 25-62-9z"/>
                    <g class="cubeface"><text x="2035" y="310" font-size="23" transform="rotate(5 2035 302)">TOP</text><text x="2049" y="242" font-size="18" transform="rotate(188 2049 236)">BACK</text><text x="2097" y="288" font-size="13" transform="rotate(-82 2097 284)">RIGHT</text></g>
                    <g class="compasstext"><text x="1945" y="320" font-style="italic" transform="rotate(16 1945 309)">W</text><text x="2167" y="361" font-style="italic" transform="rotate(12 2167 349)">E</text><text x="2005" y="410" font-style="italic" transform="rotate(8 2005 397)" font-size="38">S</text></g>
                </svg>
                <div class="vp-controls"><button>+</button><button>Custom View</button><button>X-Ray</button></div>
                <button class="ucs lit">Unnamed<svg><use href="#down"/></svg></button>
                <div class="command">
                    <div class="history"><div>Specify base point:<br>Specify rotation angle or [Copy/Reference] &lt;270&gt;: 90<br>Command:</div><span class="thumb"></span></div>
                    <div class="prompt"><button title="Recent commands">&gt;_<span class="caret"></span></button><input type="text" aria-label="Command" placeholder="Type a command"><span class="caret"></span></div>
                </div>
            </section>
        </main>

        <aside class="inspector">
            <div class="side-tabs">
                <button class="active" title="Layers"><svg viewBox="0 0 32 32"><use href="#layers" x="-1" width="30" height="30"/><circle class="gk" cx="25" cy="24" r="8"/><path class="lk" d="M25 18v2M25 22v7"/></svg></button>
                <button title="References"><svg viewBox="0 0 32 32"><path class="g" d="M1 20h6q4-2 4-7V6h13v8h8v18H1z"/><path class="w" d="M26 6l6 7h-6z"/><path class="l" d="M5 6v9q2 2 3 0V4q-1-4-4-3-3 0-3 3v12"/></svg></button>
                <button title="Sheet Sets"><svg viewBox="0 0 32 32"><path class="g" d="M2 1h27v30H2z"/><path class="m" d="M2 1h27v7H2z"/><path class="d" d="M5 11h6v6H5zM5 19h6v5H5z"/><path fill="#77797e" d="M13 11h5v6h-5zM20 11h6v6h-6zM13 19h5v5h-5zM20 19h6v5h-6zM5 26h21v3H5z"/></svg></button>
                <span></span>
                <button class="more" title="More">»</button>
            </div>

            <section class="layers">
                <header class="panel-head">
                    <h2>Layers</h2>
                    <div class="layer-tools">
                        <button title="Make Current"><svg viewBox="0 0 32 32"><use href="#layers" y="5" width="32" height="28"/><path class="b" d="M9 9h22l-9 12H1z"/><circle class="g" cx="16" cy="6" r="6"/></svg></button>
                        <button title="Match Layer"><svg viewBox="0 0 32 32"><use href="#layers"/><use href="#broom" x="15" y="16" width="17" height="16"/></svg></button>
                        <button title="Layer Previous"><svg viewBox="0 0 32 32"><use href="#layers" x="2" y="5" width="30" height="27"/><path class="bk" d="M0 8l10-8v5q10 0 12 12-4-5-12-5v5z"/></svg></button>
                        <button title="Isolate"><svg viewBox="0 0 32 32"><use href="#layers"/><path class="b" d="M5 23h14l8-11v4l-7 11H3z"/><path class="lw" d="M27 20l-9 10M18 22v8h7"/></svg></button>
                        <button title="Unisolate"><svg viewBox="0 0 32 32"><use href="#layers"/><path class="b" d="M5 23h14l8-11v4l-7 11H3z"/><path class="lw" d="M18 31l10-12M21 19h8v7"/></svg></button>
                        <button title="Freeze"><svg viewBox="0 0 32 32"><use class="g" href="#layer" x="-4" width="32" height="28"/><use class="cy" href="#flake" x="13" y="13" width="18" height="18"/></svg></button>
                        <button title="Off"><svg viewBox="0 0 32 32"><use class="g" href="#layer" x="-4" width="32" height="28"/><path class="cyf" d="M17 18a6 6 0 1 1 12 0q0 4-3 7h-6q-3-3-3-7z"/><path class="w" d="M20 26h6l-1 5h-4z"/></svg></button>
                        <button title="Lock"><svg viewBox="0 0 32 32"><use class="g" href="#layer" x="-4" width="32" height="28"/><use class="cy" href="#lock" x="16" y="11" width="14" height="20"/></svg></button>
                        <button title="Unlock"><svg viewBox="0 0 32 32"><use class="g" href="#layer" x="-4" width="32" height="28"/><path class="y" d="M13 20h14v11H13z"/><path fill="none" stroke="#fbd183" stroke-width="2" d="M23 20v-5a4 4 0 0 1 8 0v4"/><path class="k" d="M19 23h2v5h-2z"/></svg></button>
                    </div>
                    <button class="dock" title="Undock"><svg viewBox="0 0 24 30"><use href="#dock"/></svg></button>
                </header>

                <div class="field tall">
                    <span class="dot"></span><svg class="mini dim" viewBox="0 0 16 22"><use href="#lock"/></svg><svg class="mini dim" viewBox="0 0 16 16"><use href="#flake"/></svg><span class="swatch"></span>
                    <select aria-label="Current layer"><option>cubo</option></select>
                </div>
                <div class="field tall"><select aria-label="Layer state"><option>Unsaved Layer State</option></select></div>
                <button class="disclosure"><span class="tri"></span>Hide Layer List</button>

                <div class="layer-list">
                    <table>
                        <colgroup><col class="c-eye"><col><col class="c-ic"><col class="c-ic"><col class="c-w"><col class="c-w"><col class="c-ic"></colgroup>
                        <thead>
                            <tr>
                                <th><svg class="hi" viewBox="0 0 24 24"><path class="g" d="M0 12Q12-4 24 12 12 28 0 12z"/><circle cx="12" cy="12" r="5" class="ldk"/></svg></th>
                                <th class="name"><div><svg class="half" viewBox="0 0 16 16"><path class="l" d="M1 1h14v14H1z"/><path class="g" d="M16 0v16H0z"/></svg>Name<svg class="sort" viewBox="0 0 10 18"><path class="g" d="M0 7l5-7 5 7zM0 11h10l-5 7z"/></svg></div></th>
                                <th><svg class="hi" viewBox="0 0 16 16"><use href="#flake"/></svg></th>
                                <th><svg class="hi" viewBox="0 0 16 22"><use href="#lock"/></svg></th>
                                <th><svg class="hi" viewBox="0 0 20 20"><path class="g" d="M1 2h18v2H1zM1 8h18v3H1zM1 14h18v5H1z"/></svg></th>
                                <th><svg class="hi" viewBox="0 0 20 20"><path class="l" stroke-dasharray="2 2" d="M1 3h18"/><path class="l" stroke-dasharray="5 2" d="M1 10h18"/><path class="l" d="M1 18h18"/></svg></th>
                                <th><svg class="hi" viewBox="0 0 20 20"><path class="l" d="M1 2h14v15H1zM5 6h14v9H5z"/></svg></th>
                            </tr>
                        </thead>
                        <tbody>
                            <tr><td><span class="dot"></span></td><td><div><span class="swatch"></span>0</div></td><td></td><td></td><td>D...</td><td><span class="rule"></span></td><td></td></tr>
                            <tr class="selected"><td><span class="dot"></span></td><td><div><span class="swatch"></span>cubo</div></td><td></td><td></td><td>D...</td><td><span class="rule"></span></td><td></td></tr>
                        </tbody>
                    </table>
                </div>

                <div class="list-actions">
                    <button title="New Layer"><svg viewBox="0 0 32 32"><path class="l" d="M14 4h14l-9 9H6zM5 20h14l9-11M5 27h14l9-11"/></svg></button>
                    <button title="Layer States"><svg viewBox="0 0 32 32"><path class="l" d="M12 1h12l-7 9H3zM3 15h12M3 21h10"/><path class="dw" d="M15 17h15v14H15z"/><path class="lw" d="M15 20h15M18 24h3M23 24h5M18 28h3M23 28h5"/></svg></button>
                    <button title="New Group"><svg viewBox="0 0 32 32"><path class="g" d="M3 4h11l4 4h7v3H10L4 26H3z"/><path class="g" d="M11 13h20l-7 14H6z"/></svg></button>
                    <button title="New Dynamic Group"><svg viewBox="0 0 32 32"><path class="g" d="M3 4h11l4 4h7v3H10L4 26H3z"/><path class="g" d="M11 13h20l-7 14H6z"/><path class="k" d="M20 14l-7 7h5l-2 5 8-7h-5z"/></svg></button>
                    <i></i>
                    <button title="Remove"><svg viewBox="0 0 32 32"><path fill="#858b95" d="M8 14h16v4H8z"/></svg></button>
                    <button class="wide" title="Columns"><svg viewBox="0 0 32 32"><path class="l" d="M6 6h20v20H6zM13 6v20M19 6v20"/></svg><span class="caret"></span></button>
                </div>
                <label class="search"><svg viewBox="0 0 36 28"><circle cx="10" cy="11" r="9"/><path d="M16 18l7 8M25 10l4 4 4-4"/></svg><input type="text" aria-label="Search for layer" placeholder="Search for layer"></label>
            </section>

            <section class="properties">
                <header class="panel-head">
                    <h2>Properties</h2>
                    <div class="toggle"><button>All</button><button class="on">My</button></div>
                    <button title="Edit"><svg viewBox="0 0 32 32"><path class="l" d="M23 10V2H3v26h10M7 8h12M7 14h12M7 20h7"/><path class="g" d="M13 31l2-8 9-9 7 6-10 10z"/></svg></button>
                    <button class="dock" title="Undock"><svg viewBox="0 0 24 30"><use href="#dock"/></svg></button>
                </header>
                <div class="field target off"><select aria-label="Selection" disabled><option>Model Space</option></select></div>

                <form class="props">
                    <label for="p-color">Color</label>
                    <div class="field"><span class="swatch"></span><select id="p-color"><option>ByLayer</option></select></div>
                    <label for="p-layer">Layer</label>
                    <div class="field"><select id="p-layer"><option>cubo</option></select></div>
                    <label for="p-linetype">Linetype</label>
                    <div class="field"><span class="rule"></span><select id="p-linetype"><option>ByLayer</option></select></div>
                    <label for="p-ltscale">Linetype scale</label>
                    <input id="p-ltscale" type="text" value="1.000">
                    <label for="p-lw">Lineweight</label>
                    <div class="field"><select id="p-lw"><option>ByLayer</option></select></div>
                    <label for="p-trans">Transparency</label>
                    <div class="pair"><input class="slide" id="p-trans" type="text" value="0"><button type="button" class="btn-layer" title="Transparency source"><svg viewBox="0 0 32 32"><use href="#layers" y="6" width="32" height="24"/><path class="b" d="M13 6h18l-8 9H2z"/></svg><span class="caret"></span></button></div>
                    <label for="p-text">Text style</label>
                    <div class="field"><select id="p-text"><option>Standard</option></select></div>
                    <label for="p-dim">Dimension style</label>
                    <div class="field"><select id="p-dim"><option>Standard</option></select></div>
                    <label for="p-ml">Multileader style</label>
                    <div class="field"><select id="p-ml"><option>Standard</option></select></div>
                    <label for="p-table">Table style</label>
                    <div class="field"><select id="p-table"><option>Standard</option></select></div>
                    <label for="p-ann">Annotation scale</label>
                    <div class="field"><select id="p-ann"><option>1:1</option></select></div>
                    <label for="p-th">Text height</label>
                    <div class="pair"><input id="p-th" type="text" value="0.200"><button type="button" class="btn-pick" title="Pick height"><svg viewBox="0 0 32 32"><path class="l" d="M1 0v29M31 0v10M15 23h16M23 15v16M19 19h8v8h-8z"/><path class="lb" d="M5 5h22M9 2L5 5l4 3M23 2l4 3-4 3"/></svg></button></div>
                    <label for="p-plot">Plot style</label>
                    <div class="field"><select id="p-plot"><option>ByColor</option></select></div>
                    <label for="p-pst">Plot style table</label>
                    <div class="field"><select id="p-pst"><option>None</option></select></div>
                    <label for="p-att">Plot style attached to</label>
                    <input id="p-att" type="text" value="Model" disabled>
                    <label for="p-ptt">Plot table type</label>
                    <input id="p-ptt" type="text" value="Not available" disabled>
                </form>
            </section>
        </aside>

        <footer class="status">
            <button class="layout active">Model</button>
            <button class="plus" title="New layout"><svg viewBox="0 0 32 32"><path class="l" d="M16 5v22M5 16h22"/></svg></button>
            <button class="layout">Layout1</button>
            <button class="layout">Layout2</button>
            <div class="spacer"></div>
            <div class="toggles">
                <span class="coords">1.955,&nbsp; 0.231 , 0.000</span>
                <button class="on" title="Grid"><svg viewBox="0 0 32 32"><path class="lw" d="M8 1v30M16 1v30M24 1v30M1 8h30M1 16h30M1 24h30"/></svg></button>
                <button title="Snap"><svg viewBox="0 0 32 32"><path class="g" d="M3 4h4v4H3zM14 4h4v4h-4zM25 4h4v4h-4zM3 14h4v4H3zM14 14h4v4h-4zM25 14h4v4h-4zM3 24h4v4H3zM14 24h4v4h-4zM25 24h4v4h-4z"/></svg></button>
                <button title="Ortho"><svg viewBox="0 0 32 32"><path class="l" d="M2 0v30h30M2 21h9v9"/></svg></button>
                <button title="Polar"><svg viewBox="0 0 32 32"><circle class="l" cx="14" cy="17" r="12"/><path class="l" d="M28 2L15 17h17"/></svg></button>
                <button title="Dynamic Input"><svg viewBox="0 0 32 32"><path class="l" d="M0 11h14M7 4v14"/><path class="g" d="M12 20h20v8H12z"/><path class="lk" d="M15 22v4"/></svg></button>
                <button title="Lineweight"><svg viewBox="0 0 32 32"><path class="g" d="M0 3h32v2H14v3H0zM0 11h32v2H16v4H0zM0 20h32v2H16v7H0z"/></svg></button>
                <button class="on" title="Transparency"><svg viewBox="0 0 32 32"><path class="lw" d="M3 3h26v26H3z"/><path class="w" d="M7 7h4v4H7zM15 7h4v4h-4zM11 11h4v4h-4zM19 11h4v4h-4zM7 15h4v4H7zM15 15h4v4h-4zM11 19h4v4h-4zM19 19h4v4h-4zM7 23h4v3H7zM15 23h4v3h-4z"/></svg></button>
                <button class="on" title="Selection Cycling"><svg viewBox="0 0 32 32"><path class="lw" d="M6 1H2v28h4M16 1h5v14M8 6h8v6H8z"/><circle class="lw" cx="12" cy="21" r="4"/><path class="w" d="M20 14l11 11h-5l3 5-3 2-3-5-3 3z"/></svg></button>
                <button class="on" title="Object Snap Tracking"><svg viewBox="0 0 32 32"><path class="lw" d="M25 4L2 28h30"/><path class="w" d="M11 14h8v6h-8z"/></svg></button>
                <button class="on" title="Object Snap"><svg viewBox="0 0 32 32"><path class="lw" d="M2 1h8v8H2zM14 5h17v26H6V13"/></svg></button>
                <button class="on" title="Annotation Visibility"><svg viewBox="0 0 32 32"><use href="#ann"/><circle class="w" cx="26" cy="8" r="6"/></svg></button>
                <button title="Auto Scale"><svg viewBox="0 0 32 32"><use href="#ann"/><path class="y" d="M24 1h6l-2 5h4l-8 10 1-7h-4z"/></svg></button>
                <button title="Annotation Scale"><svg viewBox="0 0 32 32"><use href="#ann" x="2"/></svg></button>
                <button class="scale">1:1<span class="caret"></span></button>
                <button title="Workspace"><svg viewBox="0 0 32 32"><path class="l" d="M1 1h12v12H1z"/><circle class="l" cx="25" cy="13" r="6"/><path class="l" d="M13 20l6 11H6z"/></svg></button>
                <button title="Settings"><svg viewBox="0 0 32 32"><use href="#gear"/></svg></button>
            </div>
        </footer>
    </div>
</body>
</html>
```

FILE: styles.css
```css
:root {
    --panel: #3c4453;
    --dark: #2f333f;
    --line: #20262f;
    --canvas: #212830;
    --field: #4f5a6d;
    --field-line: #2f3d42;
    --text: #d3d5d8;
    --icon: #d8d8d8;
    --blue: #7dc0fb;
}

* {
    box-sizing: border-box;
}

body {
    margin: 0;
    background: var(--line);
    color: var(--text);
    font-family: "Noto Sans", "Open Sans", sans-serif;
    font-size: 21px;
    font-weight: 500;
}

button, input, select {
    font: inherit;
    color: inherit;
    margin: 0;
    padding: 0;
    border: 0;
    background: none;
}

h2 {
    margin: 0;
    font-weight: 500;
}

svg {
    display: block;
    overflow: visible;
}

.clip {
    overflow: hidden;
}

.sprite {
    position: absolute;
    width: 0;
    height: 0;
}

/* icon paints */
.l, .lb, .lw, .lk, .lm, .lt, .la, .ln, .lbb, .ldk { fill: none; stroke-width: 2; }
.l { stroke: var(--icon); }
.lb { stroke: var(--blue); }
.lw { stroke: #fff; }
.lk { stroke: #4c5059; }
.lm { stroke: #8c8c8c; }
.lt { stroke: #d0a878; stroke-width: 3; }
.la { stroke: #a9a9a9; }
.ln { stroke: #7fd48a; stroke-width: 3; }
.lbb { stroke: #3a88dd; }
.ldk { stroke: var(--dark); }
.lf { fill: #6c7180; stroke: var(--icon); stroke-width: 2; }
.lensring { fill: #59616e; stroke: #f2f2f2; stroke-width: 2; }
.g { fill: var(--icon); }
.gk { fill: var(--icon); stroke: var(--panel); stroke-width: 2; }
.m { fill: #b2b2b2; }
.w { fill: #fff; }
.b { fill: #92c8f8; }
.bk { fill: #7dc0fb; stroke: var(--panel); stroke-width: 2; }
.k { fill: var(--panel); }
.d { fill: var(--dark); }
.dw { fill: var(--panel); stroke: #fff; stroke-width: 2; }
.y { fill: #fbd183; }
.r { fill: #ea6a63; }
.n { fill: #8fd6a0; }
.t { fill: #d0a878; }
.cy { color: #84d6e0; }
.cyf { fill: #84d6e0; }
.ta, .ts {
    fill: var(--icon);
    font-family: "Liberation Sans", sans-serif;
    font-weight: bold;
    text-anchor: middle;
}
.thin { font-weight: normal; }
.med { font-family: Inter, sans-serif; font-weight: 500; }
.tw { fill: #fff; font-weight: normal; }
.tb { fill: var(--blue); }
.bluepart { fill: #4a6a90; stroke: var(--blue); stroke-width: 2; }

.app {
    display: grid;
    grid-template-columns: 180px minmax(0, 1fr) 668px;
    grid-template-rows: 70px 44px minmax(0, 1fr) 44px;
    gap: 2px;
    height: 100vh;
    padding-bottom: 2px;
}

.badge {
    position: absolute;
    top: -4px;
    right: -16px;
    width: 20px;
    height: 20px;
    border-radius: 50%;
    border: 2px solid #fff;
    background: #ec7742;
}

.caret {
    display: inline-block;
    border: 7px solid transparent;
    border-top: 8px solid var(--icon);
    border-bottom: 0;
}

.tri {
    border: 8px solid transparent;
    border-top: 9px solid #f2f2f2;
    border-bottom: 0;
}

/* top toolbar */
.toolbar {
    grid-column: 1 / -1;
    display: flex;
    gap: 130px;
    align-items: center;
    padding: 2px 0 0 339px;
    background: var(--panel);
}

.tool-row {
    display: flex;
    gap: 34px;
}

.tool-row button {
    position: relative;
    width: 32px;
    height: 32px;
}

.tool-row .badge {
    right: -14px;
}

/* left palette */
.palette {
    grid-row: 2 / 5;
    display: flex;
    flex-direction: column;
    min-height: 0;
}

.palette-tabs, .side-tabs {
    display: flex;
    gap: 2px;
    height: 46px;
    padding-bottom: 2px;
    flex: none;
}

.palette-tabs button, .side-tabs button, .side-tabs > span {
    display: flex;
    align-items: center;
    justify-content: center;
    background: var(--dark);
}

.palette-tabs button {
    flex: 1 0 65px;
}

.palette-tabs .more, .side-tabs .more {
    flex: 0 0 46px;
    background: var(--panel);
    color: #a0a4aa;
    font-family: Inter, sans-serif;
    font-size: 24px;
    font-weight: 400;
    padding-bottom: 4px;
}

.palette-tabs .active, .side-tabs .active {
    background: var(--panel);
    height: 46px;
}

.palette-tabs svg {
    width: 30px;
    height: 28px;
}

.palette-body {
    flex: 1;
    min-height: 0;
    overflow: hidden;
    background: var(--panel);
    font-family: "Liberation Sans", sans-serif;
}

.tool-group::after {
    content: "";
    display: block;
    height: 2px;
    margin: 10px 8px 0;
    background: var(--line);
}

.tool-group:last-child::after {
    display: none;
}

.tool-group h2 {
    display: flex;
    align-items: center;
    gap: 9px;
    height: 40px;
    padding: 6px 10px 0 9px;
    color: #f2f2f2;
    font-size: 20px;
}

.tool-group:first-child h2 {
    height: 38px;
    padding-top: 4px;
}

.tool-group h2 button {
    margin-left: auto;
}

.tool-group h2 svg {
    width: 19px;
    height: 19px;
}

.tools {
    display: grid;
    grid-template-columns: repeat(3, 60px);
    grid-auto-rows: 64px;
}

.tools button {
    position: relative;
    padding: 16px 14px;
}

.tools svg {
    width: 32px;
    height: 32px;
}

.tools .more::after {
    content: "";
    position: absolute;
    right: 8px;
    bottom: 10px;
    border: 4px solid #9a9a9a;
    border-top-color: transparent;
    border-left-color: transparent;
}

.tools .badge {
    top: 10px;
    right: 8px;
}

.palette-foot {
    display: flex;
    gap: 28px;
    height: 46px;
    padding-left: 26px;
    background: var(--panel);
}

.palette-foot svg {
    width: 32px;
    height: 32px;
}

/* file tabs */
.file-tabs {
    display: flex;
    gap: 2px;
    background: var(--panel);
}

.file-tabs button {
    border-right: 2px solid var(--line);
    flex: 0 0 46px;
    padding: 0 7px;
}

.file-tabs .add {
    flex-basis: 44px;
}

.file-tabs svg {
    width: 30px;
    height: 30px;
}

.file-tabs .file {
    flex: 0 0 258px;
    margin-left: -2px;
    background: var(--field);
    color: #f5f5f5;
    font-family: "Liberation Sans", sans-serif;
    font-size: 21px;
    font-weight: bold;
    text-align: left;
}

/* drawing area */
.workspace {
    display: grid;
    grid-template-columns: 502px 10px minmax(0, 1fr);
    grid-template-rows: 540fr 10px 534fr 10px 540fr;
    background: var(--canvas);
}

.viewport {
    position: relative;
    min-height: 0;
    overflow: hidden;
}

.viewport.main {
    grid-column: 3;
    grid-row: 1 / 6;
}

.canvas {
    width: 100%;
    height: 100%;
    overflow: hidden;
}

.viewport.main::after {
    content: "";
    position: absolute;
    inset: 2px -2px 2px 0;
    pointer-events: none;
    box-shadow: inset 0 0 0 1px #17365c, inset 0 0 0 2px #16273b, inset 0 0 0 3px #1259a4, inset 0 0 0 4px #15365c, inset 0 0 0 5px #0b7bee, inset 0 0 0 6px #153c68, inset 0 0 0 7px #1259a4, inset 0 0 0 8px #16273b, inset 0 0 0 9px #17365c;
}

.split-h, .split-v {
    display: flex;
    align-items: center;
    justify-content: center;
    background: repeating-linear-gradient(#45474a 0 1px, #292d32 1px 3px);
}

.split-h::before {
    content: "";
    width: 26px;
    height: 5px;
    border: solid #7a7d80;
    border-width: 1px 0;
}

.split-v {
    grid-column: 2;
    grid-row: 1 / 6;
    flex-direction: column;
    justify-content: space-between;
    padding: 256px 0 244px;
    background: repeating-linear-gradient(90deg, #45474a 0 1px, #292d32 1px 3px);
}

.split-v i {
    width: 5px;
    height: 26px;
    border: solid #7a7d80;
    border-width: 0 1px;
}

.minor, .major, .axis-x, .axis-y, .edge, .ghost { fill: none; stroke-width: 1; }
.minor { stroke: #272e38; }
.major { stroke: #31384a; }
.axis-x { stroke: #4d2a33; }
.axis-x.strong { stroke: #6e2429; }
.axis-y { stroke: #246a28; stroke-width: 1; }
.edge { stroke: #f4f4f4; stroke-width: 1; }
.main .edge.soft { stroke: #c4c5c6; }
.edge.dots { stroke-dasharray: 3 2; }
.face { fill: #b8b8b8; fill-opacity: .42; }
.side { fill: #969a98; fill-opacity: .43; }
.ghost { stroke: #4c4e54; }
.ring { fill: none; stroke: #3a4046; stroke-width: 1; }
.cube { fill: #575b61; stroke: #666a70; }
.cubetext { fill: #484c52; font-size: 9px; font-weight: bold; text-anchor: middle; }
.gizmo path, .crosshair path { fill: none; }
.gizmo path[fill] { fill: #9be796; }
.gizmo text { font-family: Lato, sans-serif; font-size: 24px; font-weight: 300; text-anchor: middle; }
.compass { fill: none; stroke: #474d54; stroke-width: 28; }
.cubeline { fill: none; stroke: #44484d; stroke-dasharray: 9 3; }
.cubeface { fill: #454b51; font-weight: bold; text-anchor: middle; }
.compasstext { fill: #b0b1b3; font-family: "Liberation Sans", sans-serif; font-size: 32px; font-weight: bold; text-anchor: middle; }

.ucs {
    position: absolute;
    right: 12px;
    top: 124px;
    display: flex;
    align-items: center;
    justify-content: space-between;
    width: 104px;
    height: 24px;
    padding: 0 10px 0 8px;
    border-radius: 9px;
    background: #3f464d;
    color: #20272e;
    font-size: 21px;
    font-weight: 400;
    line-height: 24px;
}

.ucs svg {
    width: 18px;
    height: 10px;
    fill: #4d565d;
    stroke: #20272e;
    stroke-width: 2;
}

.ucs.lit {
    top: 340px;
    right: 88px;
    width: 144px;
    background: #69757a;
}

.ucs.lit svg {
    fill: #7b888c;
}

.vp-controls {
    position: absolute;
    top: 12px;
    left: 32px;
    display: flex;
    color: #a2a4a6;
    font-size: 24px;
    line-height: 24px;
}

.vp-controls button {
    padding: 0 14px 0 11px;
    border-left: 2px solid #85888b;
}

.vp-controls button:first-child {
    border: 0;
    padding: 0 23px 0 0;
}

.command {
    position: absolute;
    left: 5px;
    bottom: 2px;
    width: 994px;
    color: #b9bdc2;
    font-size: 20px;
    line-height: 30px;
    z-index: 1;
}

.history {
    display: flex;
    justify-content: space-between;
    align-items: flex-end;
    margin-left: 77px;
    padding: 5px 9px 0 8px;
    background: var(--panel);
}

.thumb {
    width: 8px;
    height: 40px;
    margin-bottom: 2px;
    border-radius: 4px;
    background: #989a9d;
}

.prompt {
    display: flex;
    align-items: center;
    height: 48px;
    border-top: 2px solid var(--line);
    padding-right: 7px;
    background: var(--panel);
}

.prompt button {
    width: 77px;
    height: 46px;
    border-right: 2px solid var(--line);
    font-family: "Liberation Mono", monospace;
    font-weight: bold;
}

.prompt input {
    flex: 1;
    padding-left: 8px;
    outline: 0;
}

.prompt input::placeholder {
    color: #a3a8ae;
    font-style: italic;
}

.prompt .caret {
    margin-left: 4px;
    border-width: 6px 5px 0;
    border-top-color: #a3a8ae;
    vertical-align: middle;
}

/* right column */
.inspector {
    grid-column: 3;
    grid-row: 2 / 4;
    display: flex;
    flex-direction: column;
    min-width: 0;
    font-size: 22px;
}

.side-tabs button {
    flex: 0 0 103px;
}

.side-tabs > span {
    flex: 1;
}

.side-tabs svg {
    width: 32px;
    height: 28px;
}

.layers, .properties {
    background: var(--panel);
    padding: 0 20px 0 22px;
}

.panel-head {
    display: flex;
    align-items: flex-start;
}

.panel-head h2 {
    color: #eef0f2;
    font-size: 23px;
    line-height: 36px;
    font-weight: 400;
}

.panel-head .dock {
    width: 22px;
    padding-top: 2px;
}

.dock svg {
    width: 22px;
    height: 27px;
}

.layers .dock {
    margin-left: auto;
}

.layer-tools {
    display: flex;
    align-items: flex-start;
    gap: 16px;
    height: 67px;
    padding: 11px 0 0 34px;
}

.layer-tools svg {
    width: 32px;
    height: 32px;
}

.field {
    position: relative;
    display: flex;
    align-items: center;
    height: 38px;
    border: 2px solid var(--field-line);
    border-radius: 5px;
    background: var(--field);
    color: #fff;
}

.field::after {
    content: "";
    position: absolute;
    right: 6px;
    top: 12px;
    border: 7px solid transparent;
    border-top: 8px solid #dfe2e5;
    border-bottom: 0;
    pointer-events: none;
}

.field select {
    flex: 1;
    height: 100%;
    padding: 0 24px 2px 10px;
    appearance: none;
    outline: 0;
    opacity: 1;
}

.field.tall {
    height: 48px;
    margin-bottom: 8px;
}

.field.tall::after {
    top: 16px;
}

.tall .dot {
    margin: 0 17px 0 20px;
}

.tall .swatch {
    margin: 0 14px 0 16px;
}

.mini {
    width: 17px;
    height: 20px;
    margin-right: 16px;
}

.mini.dim {
    color: #6d7686;
}

.mini + .mini {
    margin-right: 0;
}

.dot {
    display: inline-block;
    flex: none;
    width: 16px;
    height: 16px;
    border-radius: 50%;
    background: var(--icon);
}

.swatch {
    flex: none;
    width: 18px;
    height: 18px;
    border: 2px solid #000;
    background: #fff;
}

.rule {
    display: inline-block;
    flex: none;
    width: 64px;
    height: 2px;
    background: #fff;
}

.disclosure {
    display: flex;
    align-items: center;
    gap: 22px;
    height: 40px;
    margin-bottom: 10px;
    padding-left: 7px;
    color: #bfc3c8;
}

.disclosure .tri {
    border-top: 14px solid #8f9296;
}

.layer-list {
    min-height: 348px;
    margin: 0 -1px 0 -2px;
    border: 2px solid #2b313c;
    background: var(--field);
    color: #fff;
}

.layer-list table {
    width: 100%;
    table-layout: fixed;
    border-collapse: collapse;
}

.c-eye { width: 51px; }
.c-ic { width: 44px; }
.c-w { width: 94px; }

.layer-list th {
    height: 44px;
    padding: 0;
    border-right: 2px solid #2a2e3a;
    border-bottom: 2px solid #2a2e3a;
    background: var(--dark);
    color: var(--icon);
}

.layer-list th:last-child {
    border-right: 0;
}

.layer-list th.name {
    background: var(--field) conic-gradient(from 145deg at 50% 0, #4a9aee 0 70deg, transparent 0) 50% 100% / 13px 9px no-repeat;
}

.layer-list th div, .layer-list td div {
    display: flex;
    align-items: center;
}

.layer-list th div {
    gap: 14px;
    padding: 0 13px 0 9px;
}

.layer-list td div {
    gap: 19px;
}

.half {
    width: 16px;
    height: 16px;
}

.sort {
    width: 10px;
    height: 18px;
    margin-left: auto;
}

.hi {
    width: 22px;
    height: 20px;
    margin: 0 auto;
}

.layer-list td {
    height: 38px;
    padding: 0;
    line-height: 38px;
}

.layer-list td:first-child, .layer-list td:nth-child(6) {
    text-align: center;
}

.layer-list td:first-child .dot, .layer-list .rule {
    vertical-align: middle;
}

.layer-list td:nth-child(5) {
    padding-left: 13px;
}

.selected {
    background: #919fb0;
}

.list-actions {
    display: flex;
    align-items: center;
    gap: 28px;
    height: 49px;
    padding: 0 4px 0 11px;
}

.list-actions svg {
    width: 32px;
    height: 30px;
}

.list-actions i {
    flex: 1;
}

.list-actions .wide {
    display: flex;
    align-items: center;
    padding-right: 8px;
    margin-left: -8px;
}

.list-actions .caret {
    border-width: 8px 5px 0;
}

.search {
    display: flex;
    align-items: center;
    height: 42px;
    margin-bottom: 17px;
    border: 1px solid #2b313c;
    border-radius: 7px;
    background: #fff;
    padding-left: 11px;
}

.search svg {
    width: 36px;
    height: 28px;
    fill: none;
    stroke: #55595f;
    stroke-width: 2;
}

.search input {
    flex: 1;
    padding-left: 7px;
    color: #333;
    font-family: Inter, sans-serif;
    font-size: 25px;
    font-weight: 400;
    outline: 0;
}

.search input::placeholder {
    color: #bdbdbd;
}

.properties {
    flex: 1;
    border-top: 2px solid var(--line);
}

.properties h2 {
    flex: 1;
}

.properties .panel-head {
    height: 52px;
}

.properties .panel-head > button svg {
    height: 28px;
}

.properties .panel-head > button:not(.dock) svg {
    width: 30px;
    margin-right: 20px;
}

.toggle {
    display: flex;
    border: 2px solid #2d3440;
    border-top: 0;
    margin-right: 20px;
    font-size: 18px;
    line-height: 26px;
}

.toggle button {
    width: 57px;
    height: 26px;
    color: #858b95;
}

.toggle .on {
    width: 60px;
    border-left: 2px solid #2d3440;
    background: var(--field);
    color: #fff;
}

.field.off, .props input:disabled {
    border-color: #3c4554;
    background: #434c5c;
    color: #848b97;
}

.field.off::after {
    border-top-color: #6f7785;
}

.target {
    height: 42px;
    margin-bottom: 13px;
}

.props {
    display: grid;
    grid-template-columns: 286px minmax(0, 1fr);
    grid-auto-rows: 38px;
    gap: 8px 19px;
    align-items: center;
    padding-right: 7px;
}

.props label {
    text-align: right;
    font-size: 23px;
    line-height: 36px;
    white-space: nowrap;
}

.props input {
    width: 100%;
    height: 36px;
    padding: 1px 0 0 6px;
    border: 2px solid var(--field-line);
    border-radius: 5px;
    background: var(--field);
    color: #fff;
    outline: 0;
}

.props .swatch {
    margin: 0 8px 0 18px;
}

.props .rule {
    margin: 0 16px 0 14px;
}

.pair {
    display: flex;
    gap: 6px;
    align-items: center;
}

.pair input {
    flex: 1;
    min-width: 0;
}

.props .slide {
    height: 33px;
    margin-left: 5px;
    padding-right: 5px;
    border-radius: 0;
    text-align: right;
    background: linear-gradient(90deg, transparent 49%, #8c939f 49%, #8c939f 50%, transparent 50%) 0 100% / 100% 11px no-repeat, var(--field);
    border-left-color: #3f78c8;
}

.btn-layer, .btn-pick {
    display: flex;
    align-items: center;
    justify-content: center;
    width: 78px;
    height: 37px;
    border: 2px solid var(--field-line);
    border-radius: 5px;
    background: var(--field);
}

.btn-layer {
    gap: 14px;
}

.btn-layer svg {
    width: 26px;
    height: 26px;
}

.btn-pick {
    width: 40px;
    background: none;
}

.btn-pick svg {
    width: 32px;
    height: 32px;
}

/* status bar */
.status {
    grid-column: 2 / 4;
    display: flex;
    gap: 2px;
}

.status > * {
    background: var(--panel);
}

.layout {
    width: 116px;
    padding-right: 6px;
    color: #aaaeb4;
}

.layout.active {
    width: 118px;
    background: var(--field);
    color: #f5f5f5;
    font-weight: 700;
}

.plus {
    width: 44px;
    padding: 0 6px;
}

.plus svg {
    width: 32px;
    height: 32px;
}

.spacer {
    flex: 1;
}

.toggles {
    display: flex;
    align-items: center;
    gap: 4px;
    width: 984px;
    padding-right: 10px;
    color: #b4b8bd;
    font-size: 24px;
}

.coords {
    flex: 1;
    padding-left: 18px;
    white-space: nowrap;
}

.toggles button {
    display: flex;
    align-items: center;
    justify-content: center;
    width: 40px;
    height: 40px;
    color: var(--icon);
}

.toggles svg {
    width: 32px;
    height: 32px;
}

.toggles .on {
    background: #6b91be;
    color: #fff;
}

.toggles .scale {
    width: 60px;
    gap: 8px;
    padding-right: 4px;
    color: #b4b8bd;
}

.scale .caret {
    border-width: 8px 6px 0;
}
```
